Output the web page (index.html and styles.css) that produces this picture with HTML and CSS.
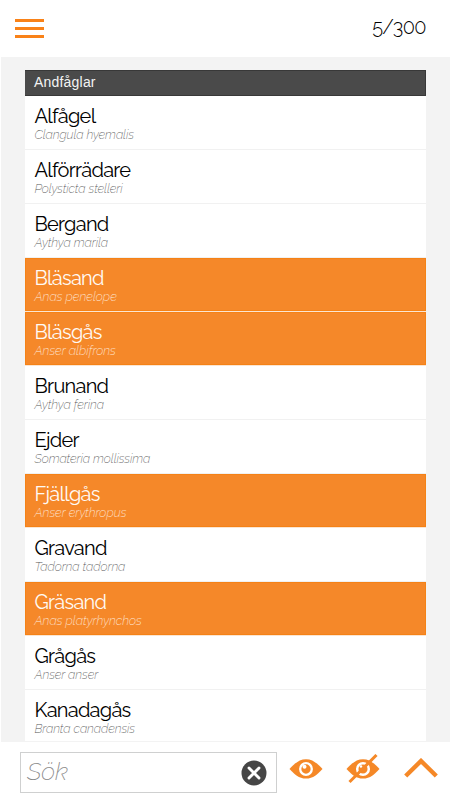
FILE: index.html
```html
<!DOCTYPE html>
<html lang="sv">
<head>
<meta charset="utf-8">
<title>Andfåglar</title>
<link rel="stylesheet" href="styles.css">
</head>
<body>
<header class="top">
  <div class="menu"><i></i><i></i><i></i></div>
  <div class="count">5/300</div>
</header>
<main class="content">
  <div class="list">
    <h2 class="group">Andfåglar</h2>
    <div class="row"><b>Alfågel</b><em>Clangula hyemalis</em></div>
    <div class="row"><b>Alförrädare</b><em>Polysticta stelleri</em></div>
    <div class="row"><b>Bergand</b><em>Aythya marila</em></div>
    <div class="row seen"><b>Bläsand</b><em>Anas penelope</em></div>
    <div class="row seen"><b>Bläsgås</b><em>Anser albifrons</em></div>
    <div class="row"><b>Brunand</b><em>Aythya ferina</em></div>
    <div class="row"><b>Ejder</b><em>Somateria mollissima</em></div>
    <div class="row seen"><b>Fjällgås</b><em>Anser erythropus</em></div>
    <div class="row"><b>Gravand</b><em>Tadorna tadorna</em></div>
    <div class="row seen"><b>Gräsand</b><em>Anas platyrhynchos</em></div>
    <div class="row"><b>Grågås</b><em>Anser anser</em></div>
    <div class="row"><b>Kanadagås</b><em>Branta canadensis</em></div>
  </div>
</main>
<footer class="bar">
  <div class="search"><span>Sök</span>
    <svg width="26" height="26" viewBox="0 0 26 26"><circle cx="13" cy="13" r="12.5" fill="#464646"/><path d="M8 8 18 18M18 8 8 18" stroke="#fff" stroke-width="2.9" stroke-linecap="round"/></svg>
  </div>
  <svg class="eye" width="34" height="30" viewBox="0 0 34 30"><path d="M.5 15C5 10 10 5.2 17 5.2S29 10 33.5 15C29 20 24 24.6 17 24.6S5 20 .5 15Z" fill="#f58827"/><circle cx="17" cy="15" r="5.8" fill="none" stroke="#fff" stroke-width="2.3"/><circle cx="15.5" cy="12.8" r="2" fill="#fff"/></svg>
  <svg class="eye-off" width="34" height="30" viewBox="0 0 34 30"><path d="M.5 15C5 10 10 5.2 17 5.2S29 10 33.5 15C29 20 24 24.6 17 24.6S5 20 .5 15Z" fill="#f58827"/><circle cx="17" cy="15" r="5.8" fill="none" stroke="#fff" stroke-width="2.5"/><circle cx="15" cy="12.5" r="1.3" fill="#fff"/><path d="M3.5 28 30.5 1" stroke="#f58827" stroke-width="3"/></svg>
  <svg class="up" width="34" height="20" viewBox="0 0 34 20"><path d="M1.7 18 17 3 32.3 18" fill="none" stroke="#f58827" stroke-width="4.4"/></svg>
</footer>
</body>
</html>
```
FILE: styles.css
```css
* { box-sizing: border-box; }
body {
  margin: 0;
  width: 450px;
  height: 800px;
  overflow: hidden;
  display: flex;
  flex-direction: column;
  background: #fff;
  font-family: Raleway, Lato, sans-serif;
}
.top {
  height: 57px;
  flex: none;
  display: flex;
  justify-content: space-between;
  padding: 19px 24px 0 15px;
}
.menu { width: 29px; display: flex; flex-direction: column; gap: 5px; }
.menu i { height: 3px; background: #f98218; }
.count {
  height: 20px;
  margin-top: -2px;
  line-height: 20px;
  font-weight: 300;
  font-size: 20px;
  letter-spacing: -.6px;
  color: #000;
}
.content {
  height: 685px;
  flex: none;
  margin-left: 1px;
  padding: 13px 24px 0;
  background: #f3f3f3;
  overflow: hidden;
}
.list { height: 672px; overflow: hidden; background: #fff; border-bottom: 1px solid #f3f3f3; margin-left: -.5px; }
.group {
  height: 26px;
  margin: 0;
  padding-left: 9.5px;
  border: 1px solid #383838;
  border-left: 0;
  background: #4a4a4a;
  color: #f3f3f3;
  font: 400 14px/23px "Liberation Sans", sans-serif;
  letter-spacing: .2px;
}
.row {
  height: 54px;
  padding: 8px 0 0 10px;
  border-bottom: 1px solid #f1f1f1;
  color: #000;
}
.row b, .row em { display: block; white-space: nowrap; }
.row b { font-size: 20px; line-height: 25px; font-weight: 400; letter-spacing: -.73px; }
.row em { font-size: 12.5px; line-height: 11px; font-weight: 200; color: #555; letter-spacing: -.1px; }
.seen { background: #f58829; color: #fffaf5; border-bottom-color: #fbe5d2; box-shadow: inset 0 0 0 1px #f58216; }
.seen em { color: #fff0e2; letter-spacing: 0; }
.bar { flex: none; height: 58px; display: flex; align-items: flex-start; padding: 10px 0 0 20px; }
.search {
  width: 257px;
  height: 41px;
  display: flex;
  align-items: center;
  justify-content: space-between;
  padding: 0 9px 0 6px;
  border: 1px solid #cfd0d0;
}
.search span { font-size: 24.5px; line-height: 36px; margin-top: -2px; font-style: italic; font-weight: 200; color: #888; }
.eye { margin: 2px 0 0 12px; }
.eye-off { margin: 2px 0 0 23px; }
.up { margin: 6px 0 0 24px; }
```
